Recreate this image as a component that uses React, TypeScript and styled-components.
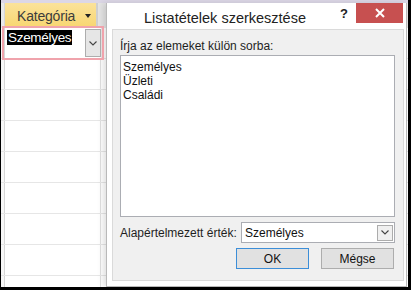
import React from "react";
import styled, { createGlobalStyle } from "styled-components";

const GlobalStyle = createGlobalStyle`
  html, body { margin: 0; padding: 0; background: #ffffff; }
  body { font-family: "Liberation Sans", Arial, sans-serif; }
`;

const ROWS = 8;

export default function App() {
  return (
    <>
      <GlobalStyle />
      <Frame>
        <TopStrip />
        <Sheet>
          <HeaderRow>
            <Gutter $header />
            <HeaderCell>
              <span>Kategória</span>
              <SortArrow />
            </HeaderCell>
            <NextHeader />
          </HeaderRow>
          <Row>
            <Gutter />
            <Cell $selected>
              <Selected>Személyes</Selected>
              <CellDrop>
                <Chevron />
              </CellDrop>
            </Cell>
          </Row>
          {Array.from({ length: ROWS }).map((_, i) => (
            <Row key={i}>
              <Gutter />
              <Cell />
            </Row>
          ))}
        </Sheet>

        <Dialog>
          <TitleBar>
            <Title>Listatételek szerkesztése</Title>
            <Help>?</Help>
            <CloseButton>
              <svg width="10" height="10" viewBox="0 0 10 10">
                <path d="M1 1 L9 9 M9 1 L1 9" stroke="#fff" strokeWidth="2" />
              </svg>
            </CloseButton>
          </TitleBar>
          <Panel>
            <Label>Írja az elemeket külön sorba:</Label>
            <ListBox>
              <div>Személyes</div>
              <div>Üzleti</div>
              <div>Családi</div>
            </ListBox>
            <DefaultRow>
              <Label>Alapértelmezett érték:</Label>
              <Select>
                <span>Személyes</span>
                <SelectButton>
                  <Chevron />
                </SelectButton>
              </Select>
            </DefaultRow>
            <Buttons>
              <Button $primary>OK</Button>
              <Button>Mégse</Button>
            </Buttons>
          </Panel>
        </Dialog>
      </Frame>
    </>
  );
}

const Chevron = () => (
  <svg width="8" height="5" viewBox="0 0 8 5">
    <path d="M0.5 0.5 L4 4 L7.5 0.5" fill="none" stroke="#444" strokeWidth="1.1" />
  </svg>
);

const Frame = styled.div`
  position: relative;
  width: 411px;
  height: 290px;
  box-sizing: border-box;
  border-left: 1px solid #000;
  border-right: 3px solid #000;
  border-bottom: 3px solid #000;
  background: #fff;
  overflow: hidden;
`;

const TopStrip = styled.div`
  height: 3px;
  background: #dcd7e6;
`;

const Sheet = styled.div`
  display: flex;
  flex-direction: column;
`;

const HeaderRow = styled.div`
  display: flex;
  height: 25px;
`;

const Gutter = styled.div<{ $header?: boolean }>`
  width: 3px;
  flex: none;
  background: ${({ $header }) => ($header ? "#e9e9e9" : "#f7f7f7")};
  border-right: 1px solid #d6d6d6;
`;

const HeaderCell = styled.div`
  width: 93px;
  flex: none;
  display: flex;
  align-items: center;
  justify-content: space-between;
  padding: 1px 5px 0 12px;
  box-sizing: border-box;
  font-size: 14px;
  letter-spacing: -0.2px;
  color: #3c3c3c;
  background: linear-gradient(#fbe29a, #f8d670);
  border-right: 2px solid #cfcfcf;
`;

const SortArrow = styled.span`
  width: 0;
  height: 0;
  border-left: 3px solid transparent;
  border-right: 3px solid transparent;
  border-top: 4px solid #222;
`;

const NextHeader = styled.div`
  flex: 1;
  background: #e4e4e4;
`;

const Row = styled.div`
  display: flex;
  height: 31px;
  box-sizing: border-box;
  border-bottom: 1px solid #e6e6e6;
`;

const Cell = styled.div<{ $selected?: boolean }>`
  position: relative;
  width: 95px;
  flex: none;
  display: flex;
  align-items: stretch;
  justify-content: space-between;
  border-right: 1px solid #e0e0e0;
  ${({ $selected }) =>
    $selected &&
    `
    box-shadow: 0 0 0 2px #f0a3ac;
    margin-left: -1px;
    width: 97px;
    z-index: 1;
  `}
`;

const Selected = styled.span`
  align-self: flex-start;
  margin: 2px 0 0 3px;
  padding: 0 1px;
  font-size: 13.5px;
  line-height: 15px;
  letter-spacing: -0.3px;
  background: #000;
  color: #fff;
`;

const CellDrop = styled.div`
  width: 16px;
  margin: 1px 0 1px;
  display: flex;
  align-items: center;
  justify-content: center;
  background: #e6e6e6;
  border: 1px solid #adadad;
  box-sizing: border-box;
`;

const Dialog = styled.div`
  position: absolute;
  left: 105px;
  top: 3px;
  width: 301px;
  height: 284px;
  box-sizing: border-box;
  background: #fff;
  border: 1px solid #b9b9b9;
  border-top: none;
  box-shadow: -3px 0 6px rgba(0, 0, 0, 0.12);
  display: flex;
  flex-direction: column;
  padding: 0 2px 5px 5px;
`;

const TitleBar = styled.div`
  height: 29px;
  display: flex;
  align-items: flex-start;
`;

const Title = styled.div`
  margin: 6px 0 0 32px;
  font-size: 14.5px;
  line-height: 18px;
  color: #222;
  flex: 1;
`;

const Help = styled.div`
  margin: 3px 8px 0 0;
  font-weight: bold;
  font-size: 13px;
  color: #222;
`;

const CloseButton = styled.div`
  width: 47px;
  height: 20px;
  margin-right: 1px;
  background: #c75050;
  display: flex;
  align-items: center;
  justify-content: center;
`;

const Panel = styled.div`
  flex: 1;
  background: #f0f0f0;
  border: 1px solid #dadada;
  display: flex;
  flex-direction: column;
  padding: 8px 8px 11px 7px;
`;

const Label = styled.div`
  font-size: 12px;
  line-height: 16px;
  color: #1e1e1e;
  white-space: nowrap;
`;

const ListBox = styled.div`
  margin-top: 1px;
  height: 162px;
  box-sizing: border-box;
  background: #fff;
  border: 1px solid #abadb3;
  padding: 4px 2px;
  font-size: 12px;
  line-height: 14px;
  color: #111;
`;

const DefaultRow = styled.div`
  display: flex;
  align-items: center;
  justify-content: space-between;
  margin-top: 5px;
`;

const Select = styled.div`
  width: 154px;
  height: 21px;
  box-sizing: border-box;
  background: #fff;
  border: 1px solid #abadb3;
  display: flex;
  align-items: center;
  justify-content: space-between;
  padding-left: 3px;
  font-size: 12px;
  color: #111;
`;

const SelectButton = styled.div`
  width: 16px;
  height: 16px;
  margin-right: 1px;
  box-sizing: border-box;
  border: 1px solid #acacac;
  background: #f0f0f0;
  display: flex;
  align-items: center;
  justify-content: center;
`;

const Buttons = styled.div`
  display: flex;
  justify-content: flex-end;
  gap: 12px;
  margin-top: 5px;
  padding-right: 1px;
`;

const Button = styled.div<{ $primary?: boolean }>`
  width: 73px;
  height: 21px;
  box-sizing: border-box;
  display: flex;
  align-items: center;
  justify-content: center;
  background: #e1e1e1;
  border: 1px solid ${({ $primary }) => ($primary ? "#3c8ed8" : "#adadad")};
  font-size: 12px;
  color: #111;
`;
